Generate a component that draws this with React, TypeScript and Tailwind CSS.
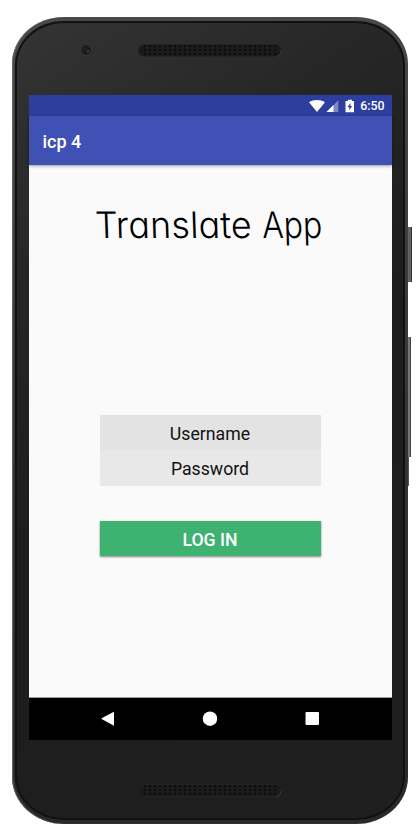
function Speaker({ id }: { id: string }) {
  return (
    <svg width="144" height="13" viewBox="0 0 144 13">
      <defs>
        <pattern id={id} width="5" height="4" patternUnits="userSpaceOnUse">
          <rect width="5" height="4" fill="#1b1b1b" />
          <rect x="1" y="1" width="2" height="2" fill="#0c0c0c" />
        </pattern>
      </defs>
      <rect x=".5" y=".5" width="143" height="12" rx="6" fill="#191919" stroke="#242424" />
      <rect x="3" y="1" width="138" height="11" rx="5" fill={`url(#${id})`} />
      <path d="M138 12.5c3 0 5-3 5-6" fill="none" stroke="#484848" strokeWidth=".7" />
    </svg>
  );
}

function StatusBar() {
  return (
    <div className="flex h-[21px] items-center justify-end bg-[#2c3e9e] pr-[7px] text-white">
      <svg width="46" height="14" viewBox="0 0 46 14" className="mr-[5px]" fill="#fff">
        <path d="M0 3.3C4.2.2 11.8.2 16 3.3L8 13Z" />
        <path d="M17.5 13 29.3 1.2V13Z" opacity=".38" />
        <path d="M17.5 13 24.5 6v7Z" />
        <path fillRule="evenodd" d="M37 2h2V.7h4V2h2v11.3h-8.5V2Zm4.4 1.9-2.9 4.3h1.8v3.1l2.9-4.4h-1.8Z" />
      </svg>
      <span className="pt-px text-[12.3px] font-medium leading-none">6:50</span>
    </div>
  );
}

export default function App() {
  return (
    <div className="relative h-[833px] w-[419px] overflow-hidden bg-white pl-[12px] pt-[17px] font-[Roboto,sans-serif]">
      <div className="absolute left-[407px] top-[227px] h-[55px] w-[5px] border-r border-[#343434] bg-[#626262]" />
      <div className="absolute left-[407px] top-[337px] h-[120px] w-[4px] border-r border-[#444] bg-[#777]" />
      <div className="absolute left-[407px] top-[457px] h-[29px] w-[2px] bg-[#555]" />
      <div className="relative h-[807px] w-[396px] rounded-[52px/47px] bg-linear-to-b from-[#484848] via-[#353535] to-[#292929] p-[3px] pt-[4px] shadow-[inset_1px_0_1px_#6a6a6a]">
        <div className="flex h-[799px] w-[390px] flex-col items-center rounded-[49px/44px] border-2 border-[#111] bg-[linear-gradient(145deg,#343434_0%,#262626_25%,#1d1d1d_50%,#1f1f1f_100%)]">
          <div className="relative flex h-[72px] w-full shrink-0 justify-center pt-[21px]">
            <svg width="16" height="16" viewBox="0 0 16 16" className="absolute left-[61px] top-[19px]">
              <circle cx="8" cy="8" r="7.5" fill="#303030" />
              <circle cx="8" cy="8" r="4.7" fill="#1b1a1f" />
              <circle cx="6.5" cy="7" r="2.2" fill="#22212b" />
              <circle cx="10" cy="9.5" r=".9" fill="#76504d" />
            </svg>
            <Speaker id="top-grille" />
          </div>
          <main className="flex h-[645px] w-[363px] shrink-0 flex-col bg-[#fafafa]">
            <StatusBar />
            <header className="flex h-[49px] items-center bg-[#4051b5] pl-[14px] pt-[2px] text-[18px] font-medium text-white shadow-[0_1px_3px_#0006]">
              icp 4
            </header>
            <div className="flex h-[533px] flex-col items-center border-b border-[#999]">
              <h1 className="mt-[35px] flex h-[50px] w-[230px] whitespace-nowrap font-[Inter,sans-serif] text-[36.5px] font-light leading-[50px] text-black [font-feature-settings:'cv11']">
                <span className="w-[167px] shrink-0 origin-left scale-x-98 skew-x-2 tracking-[0.2px]">Translate</span>
                <span className="w-[60px] shrink-0 origin-left scale-x-88 skew-x-2">App</span>
              </h1>
              <div className="mt-[165px] w-[221px] text-center text-[17.7px] text-[#111]">
                <div className="h-[35px] bg-[#e3e3e3] pt-px leading-[36px]">Username</div>
                <div className="h-[36px] bg-[#e8e8e8] pt-px leading-[36px]">Password</div>
              </div>
              <button className="mt-[35px] h-[35px] w-[221px] bg-[#3eb371] pt-px text-[17.7px] font-medium leading-[36px] text-white shadow-[0_1px_2px_#0007]">
                LOG IN
              </button>
            </div>
            <nav className="flex h-[42px] items-center justify-center bg-black">
              <svg width="220" height="16" viewBox="0 0 220 16" fill="#fff">
                <path d="M14 .7v14L2 8.3q-1-.6 0-1.2Z" />
                <circle cx="110" cy="7.7" r="7.2" />
                <rect x="205.5" y="1" width="13.5" height="13" rx="1" />
              </svg>
            </nav>
          </main>
          <div className="mt-[44px] shrink-0"><Speaker id="bottom-grille" /></div>
        </div>
      </div>
    </div>
  );
}
